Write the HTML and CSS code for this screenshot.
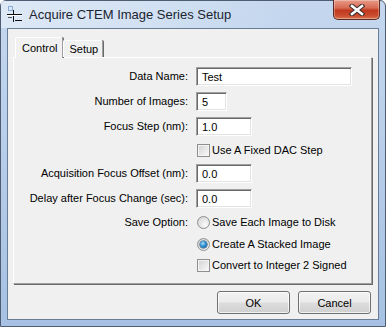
FILE: index.html
```html
<!DOCTYPE html>
<html lang="en">
<head>
    <meta charset="UTF-8">
    <title>Acquire CTEM Image Series Setup</title>
    <link rel="stylesheet" href="styles.css">
</head>
<body>
    <div class="window">
        <div class="titlebar">
            <svg class="app-icon" width="16" height="16" viewBox="0 0 16 16">
                <rect x="1.5" y="0.5" width="4" height="4" fill="none" stroke="#3b6fc4" stroke-dasharray="1 1"/>
                <rect x="6" y="4" width="1" height="12" fill="#111"/>
                <rect x="0" y="8" width="15" height="1" fill="#111"/>
                <rect x="0" y="9" width="15" height="1" fill="#fff"/>
                <rect x="8" y="14" width="7" height="1" fill="#111"/>
                <rect x="1" y="11" width="4" height="1" fill="#555"/>
            </svg>
            <span class="title">Acquire CTEM Image Series Setup</span>
            <div class="close-btn">
                <svg width="16" height="12" viewBox="0 0 16 12">
                    <path d="M3 2 L13 10 M13 2 L3 10" stroke="#3a2a2a" stroke-width="4.6" stroke-linecap="square"/>
                    <path d="M3 2 L13 10 M13 2 L3 10" stroke="#fff" stroke-width="2.6" stroke-linecap="square"/>
                </svg>
            </div>
        </div>

        <div class="client">
            <div class="tabs">
                <div class="tab active">Control</div>
                <div class="tab">Setup</div>
            </div>

            <div class="tab-panel">
                <div class="form">
                    <span class="field-label">Data Name:</span>
                    <div class="field"><input class="text-field wide" type="text" value="Test"></div>

                    <span class="field-label">Number of Images:</span>
                    <div class="field"><input class="text-field tiny" type="text" value="5"></div>

                    <span class="field-label">Focus Step (nm):</span>
                    <div class="field"><input class="text-field short" type="text" value="1.0"></div>

                    <span class="field-label"></span>
                    <div class="field"><span class="check"></span><span class="opt-text">Use A Fixed DAC Step</span></div>

                    <span class="field-label">Acquisition Focus Offset (nm):</span>
                    <div class="field"><input class="text-field short" type="text" value="0.0"></div>

                    <span class="field-label">Delay after Focus Change (sec):</span>
                    <div class="field"><input class="text-field short" type="text" value="0.0"></div>

                    <span class="field-label">Save Option:</span>
                    <div class="field"><span class="radio"></span><span class="opt-text">Save Each Image to Disk</span></div>

                    <span class="field-label"></span>
                    <div class="field"><span class="radio checked"></span><span class="opt-text">Create A Stacked Image</span></div>

                    <span class="field-label"></span>
                    <div class="field"><span class="check"></span><span class="opt-text">Convert to Integer 2 Signed</span></div>
                </div>
            </div>

            <div class="footer">
                <button class="btn">OK</button>
                <button class="btn">Cancel</button>
            </div>
        </div>
    </div>
</body>
</html>
```

FILE: styles.css
```css
html {
    background-color: #ffffff;
}

body {
    margin: 0;
    padding: 0;
    font-family: "Liberation Sans", Arial, sans-serif;
    font-size: 11px;
    color: #000;
}

.window {
    box-sizing: border-box;
    width: 386px;
    height: 327px;
    border: 1px solid #4f5d72;
    border-radius: 6px 6px 0 0;
    background: linear-gradient(180deg, #c4d7ee 0%, #b9cfea 40%, #a6c1e3 100%);
    padding: 0 6px 6px 6px;
    display: flex;
    flex-direction: column;
}

/* title bar */
.titlebar {
    height: 27px;
    display: flex;
    align-items: flex-start;
    background: linear-gradient(90deg, rgba(228,237,248,0.8) 0%, rgba(220,232,246,0.5) 45%, rgba(200,216,238,0) 75%);
    margin: 0 -6px;
    padding: 0 6px;
}

.app-icon {
    flex: none;
    margin-top: 5px;
}

.title {
    margin-left: 6px;
    margin-top: 6px;
    font-size: 13px;
    line-height: 16px;
    color: #1b2430;
}

.close-btn {
    margin-left: auto;
    margin-right: -1px;
    margin-top: -1px;
    width: 47px;
    height: 20px;
    box-sizing: border-box;
    border: 1px solid #5b2a22;
    border-top: none;
    border-radius: 0 0 5px 5px;
    background: linear-gradient(180deg, #e79a88 0%, #d86d56 40%, #c0391f 55%, #cb4f30 85%, #dc7c55 100%);
    box-shadow: inset 0 0 0 1px rgba(255,255,255,0.3);
    display: flex;
    align-items: center;
    justify-content: center;
}

/* client area */
.client {
    flex: none;
    height: 292px;
    box-sizing: border-box;
    border: 1px solid #6a7d97;
    background-color: #f0f0f0;
    display: flex;
    flex-direction: column;
}

.tabs {
    display: flex;
    align-items: flex-end;
    margin: 8px 0 0 7px;
    height: 20px;
    position: relative;
    z-index: 1;
}

.tab {
    box-sizing: border-box;
    height: 17px;
    padding: 0 4px 0 5px;
    border-top: 1px solid #ffffff;
    border-left: 1px solid #ffffff;
    border-right: 1px solid #a0a0a0;
    box-shadow: 1px 0 0 #696969;
    border-radius: 2px 2px 0 0;
    line-height: 17px;
    background-color: #f0f0f0;
}

.tab.active {
    height: 21px;
    margin-bottom: -1px;
    padding: 2px 5px 0 6px;
    line-height: 16px;
}

.tab-panel {
    box-sizing: border-box;
    height: 227px;
    margin: 0 6px 0 5px;
    border-top: 1px solid #ffffff;
    border-left: 1px solid #ffffff;
    border-right: 1px solid #a0a0a0;
    border-bottom: 1px solid #a0a0a0;
    box-shadow: 1px 1px 0 #696969;
    padding-top: 9px;
}

.form {
    display: grid;
    grid-template-columns: 175px 1fr;
    grid-template-rows: 25px 25px 24px 23px 25px 24px 22px 21px 19px;
    column-gap: 7px;
}

.field-label {
    text-align: right;
    line-height: 19px;
    height: 19px;
    padding-right: 1px;
    white-space: nowrap;
}

.field {
    height: 19px;
    display: flex;
    align-items: center;
}

.text-field {
    all: unset;
    box-sizing: border-box;
    height: 19px;
    padding: 0 3px 0 5px;
    background-color: #ffffff;
    border: 1px solid;
    border-color: #a0a0a0 #ffffff #ffffff #a0a0a0;
    box-shadow: inset 1px 1px 0 #696969, inset -1px -1px 0 #e3e3e3;
    font-family: "Liberation Sans", Arial, sans-serif;
    font-size: 11px;
    line-height: 17px;
    color: #000;
}

.text-field.wide {
    width: 156px;
}

.text-field.tiny {
    width: 31px;
}

.text-field.short {
    width: 56px;
}

.check {
    box-sizing: border-box;
    width: 13px;
    height: 13px;
    margin-left: 1px;
    border: 1px solid #8e8f8f;
    background: linear-gradient(135deg, #cfd1d4 0%, #e8e8e8 55%, #fbfbfb 100%);
    box-shadow: inset 0 0 0 1px #f4f4f4;
}

.radio {
    box-sizing: border-box;
    width: 13px;
    height: 13px;
    margin-left: 1px;
    border: 1px solid #8e8f8f;
    border-radius: 50%;
    background: radial-gradient(circle at 65% 70%, #fbfbfb 0%, #e6e6e6 45%, #cfd1d4 100%);
    display: flex;
    align-items: center;
    justify-content: center;
}

.radio.checked::after {
    content: "";
    width: 7px;
    height: 7px;
    border-radius: 50%;
    background: radial-gradient(circle at 40% 35%, #a6e0fb 0%, #2f8fd0 45%, #134f86 100%);
    box-shadow: 0 0 0 0.5px #1b3f66;
}

.opt-text {
    margin-left: 2px;
    line-height: 19px;
}

/* buttons */
.footer {
    display: flex;
    justify-content: flex-end;
    gap: 8px;
    padding: 7px 7px 0 0;
}

.btn {
    box-sizing: border-box;
    width: 73px;
    height: 23px;
    border: 1px solid #707070;
    border-radius: 3px;
    background: linear-gradient(180deg, #f2f2f2 0%, #ebebeb 48%, #dddddd 52%, #cfcfcf 100%);
    box-shadow: inset 0 0 0 1px rgba(255,255,255,0.7);
    font-family: "Liberation Sans", Arial, sans-serif;
    font-size: 11px;
    color: #000;
    padding: 0;
}
```
